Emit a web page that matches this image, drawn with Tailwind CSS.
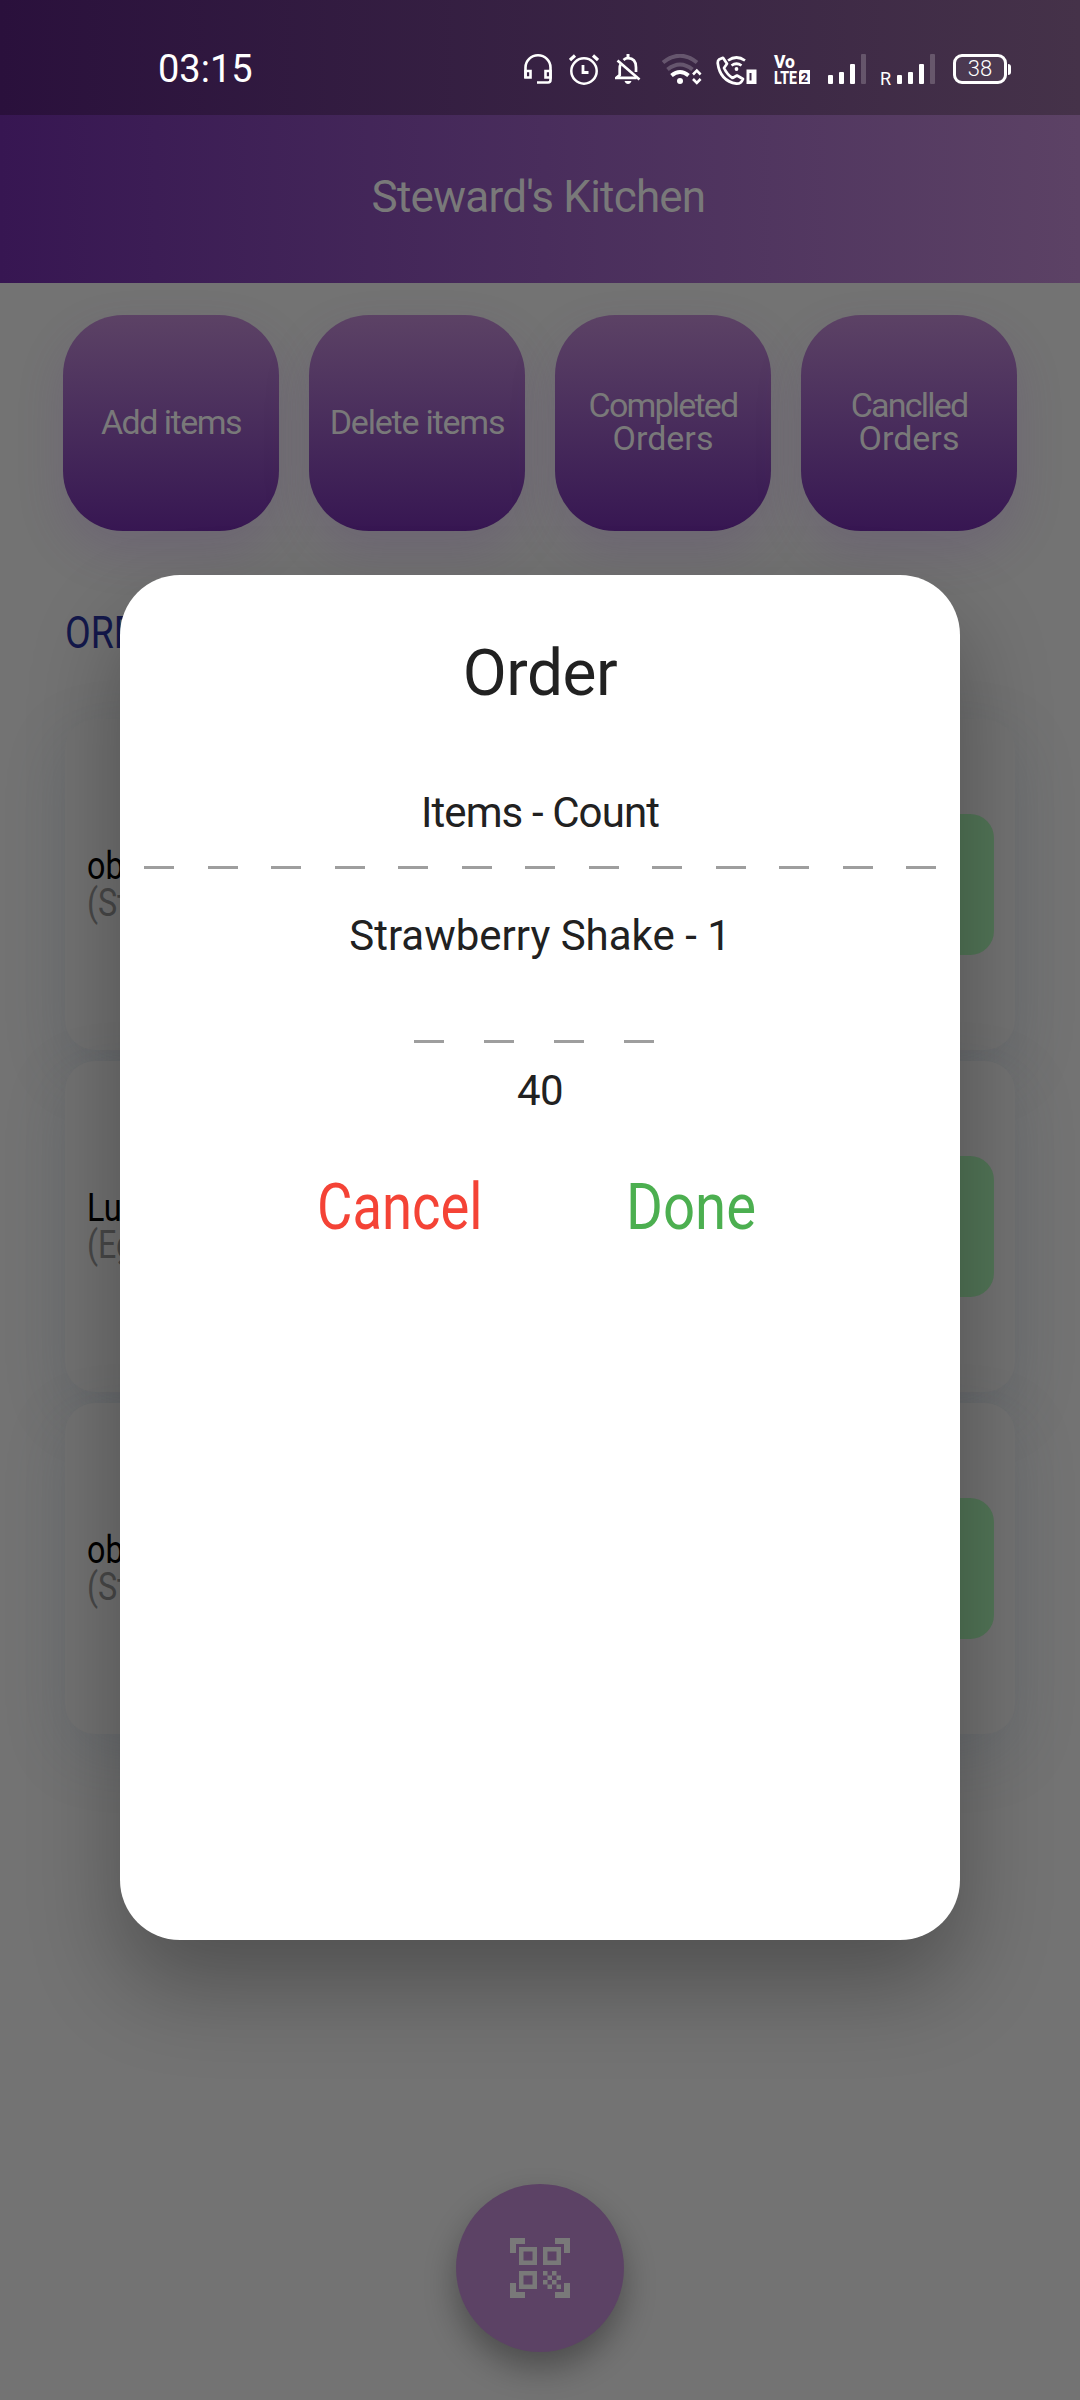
<!DOCTYPE html>
<html lang="en">
<head>
<meta charset="utf-8">
<title>Steward's Kitchen</title>
<script src="https://cdn.jsdelivr.net/npm/@tailwindcss/browser@4"></script>
</head>
<body class="w-[1080px] h-[2400px] overflow-hidden bg-[#737373] font-['Roboto',sans-serif]">
<div class="relative flex h-[2400px] w-[1080px] flex-col overflow-hidden">

  <!-- Status bar -->
  <header class="flex h-[115px] shrink-0 items-start bg-linear-to-r from-[#2a103c] to-[#453249] pt-[54px] text-white">
    <div class="ml-[158px] h-8 w-[366px] pt-px text-[38px] leading-[29px]">03:15</div>
    <!-- headset -->
    <svg class="h-8 w-7" viewBox="0 0 28 32" fill="none" stroke="white" stroke-width="2.6"><path d="M1.5 24V13.5a12.5 12.2 0 0 1 25 0V26q0 2.5-2.5 2.5H13"/><path d="M1.5 17h5v6.5h-5zM21.500 17h5v6.500h-5z"/></svg>
    <!-- alarm -->
    <svg class="ml-[17px] h-8 w-[30px]" viewBox="0 0 30 32" fill="none" stroke="white" stroke-width="2.5"><circle cx="15" cy="17" r="12.700"/><path d="M14 11v7.500h5.500" stroke-width="2.800"/><path d="M1 6l5-4.500M29 6l-5-4.500" stroke-width="3.200"/></svg>
    <!-- bell off -->
    <svg class="ml-[16px] h-8 w-[26px]" viewBox="0 0 26 32" fill="none" stroke="white" stroke-width="2.700"><path d="M5.500 10.500q-.8 1.500-.8 4V21l-3.300 2.800h20.200M8.500 6q2-1.800 4.500-1.800 8 0 8 9.300v4.500"/><path d="M2.500 6.500L24.500 25.500"/><path d="M13 0v4" stroke-width="3"/><path d="M9.500 27h7q-1 3-3.500 3t-3.500-3z" fill="white" stroke="none"/></svg>
    <!-- wifi -->
    <svg class="ml-[20px] h-8 w-[41px]" viewBox="0 0 41 32" fill="none" stroke="white" stroke-width="4"><g opacity=".22"><path d="M2 8.500Q19 -5 36 8.500"/><path d="M6.500 15.500Q19 5.500 31.500 15.500"/></g><path d="M10.500 21.500Q19 14.500 27.500 21.500"/><circle cx="19" cy="27" r="3" fill="white" stroke="none"/><path d="M32 20.500l3.800-3.800 3.800 3.800M32 25l3.800 3.800L39.600 25" stroke-width="2.600"/></svg>
    <!-- wifi calling -->
    <svg class="ml-[14px] h-8 w-[42px]" viewBox="0 0 42 32" fill="none" stroke="white" stroke-width="2.700"><path d="M3 5.500l4-1.700 4 6-3 4.200q3 6.500 8.500 10l4.500-2.500 6 3.500q-2 5-6.500 4.700Q4 27 1.700 9q0-2.500 1.300-3.500z" stroke-linejoin="round"/><path d="M12 6.500q8.500-6 17 0M15.500 11.500q5-3.500 10 0"/><circle cx="20.500" cy="15" r="1.900" fill="white" stroke="none"/><path d="M30.500 15.500h10V30h-10z" fill="white" stroke="none"/><path d="M34.500 19v7.500" stroke="#3d2947" stroke-width="2"/></svg>
    <!-- VoLTE 2 -->
    <svg class="ml-[16px] h-8 w-[37px] overflow-visible" viewBox="0 0 37 32" fill="white" font-family="Roboto, sans-serif" font-weight="800"><text x="0" y="14" font-size="18.500" textLength="21" lengthAdjust="spacingAndGlyphs">Vo</text><text x="0" y="30" font-size="19" textLength="23" lengthAdjust="spacingAndGlyphs">LTE</text><path d="M26 16h10v14H25V18z"/><text x="27" y="28" font-size="13" textLength="7" lengthAdjust="spacingAndGlyphs" fill="#3d2947">2</text></svg>
    <!-- signal 1 -->
    <svg class="ml-[17px] h-8 w-[38px]" viewBox="0 0 38 32" fill="white"><rect y="21" width="5" height="9" rx="1"/><rect x="11" y="18" width="5" height="12" rx="1"/><rect x="22" y="10" width="5" height="20" rx="1"/><rect x="33" width="5" height="30" rx="1" opacity=".2"/></svg>
    <span class="ml-[14px] w-[17px] pt-[16px] text-[18px] leading-[18px]">R</span>
    <!-- signal 2 -->
    <svg class="h-8 w-[38px]" viewBox="0 0 38 32" fill="white"><rect y="21" width="5" height="9" rx="1"/><rect x="11" y="18" width="5" height="12" rx="1"/><rect x="22" y="10" width="5" height="20" rx="1"/><rect x="33" width="5" height="30" rx="1" opacity=".2"/></svg>
    <!-- battery -->
    <div class="ml-[18px] flex items-center">
      <div class="flex h-[30px] w-[54px] items-center justify-center rounded-[9px] border-[3px] border-white bg-white/5 text-[22px] font-light leading-none">38</div>
      <div class="ml-px h-[11px] w-[3px] rounded-r bg-white"></div>
    </div>
  </header>

  <!-- App bar -->
  <div class="flex h-[168px] shrink-0 items-center justify-center bg-linear-to-r from-[#371652] to-[#5c4265] text-[44px] leading-none tracking-[-0.8px] text-[#797979]"><h1 class="-mt-[5px] -ml-[3px]">Steward's Kitchen</h1></div>

  <!-- Actions -->
  <nav class="mt-8 grid grid-cols-4 gap-[30px] pr-[63px] pl-[63px] text-center text-[34px] leading-[33px] tracking-[-1.5px] text-[#797979]">
    <button class="flex h-[216px] items-center justify-center rounded-[60px] bg-linear-to-b from-[#5c4265] to-[#371652] pb-0.5 shadow-[0_20px_45px_rgba(90,60,120,0.22)]">Add items</button>
    <button class="flex h-[216px] items-center justify-center rounded-[60px] bg-linear-to-b from-[#5c4265] to-[#371652] pb-0.5 shadow-[0_20px_45px_rgba(90,60,120,0.22)]"><span class="tracking-[-1.2px]">Delete items</span></button>
    <button class="flex h-[216px] flex-col items-center justify-center rounded-[60px] bg-linear-to-b from-[#5c4265] to-[#371652] pb-0.5 shadow-[0_20px_45px_rgba(90,60,120,0.22)]"><span class="tracking-[-1.8px]">Completed</span><span class="tracking-normal">Orders</span></button>
    <button class="flex h-[216px] flex-col items-center justify-center rounded-[60px] bg-linear-to-b from-[#5c4265] to-[#371652] pb-0.5 shadow-[0_20px_45px_rgba(90,60,120,0.22)]"><span class="tracking-[-1.8px]">Canclled</span><span class="tracking-normal">Orders</span></button>
  </nav>

  <!-- Orders -->
  <h2 class="mt-[80px] ml-[65px] h-[44px] w-[120px] origin-left scale-x-85 text-[44px] leading-[44px] text-[#13184b]">ORD</h2>
  <main class="mt-[64px] flex flex-col gap-[11px] pr-[65px] pl-[65px]">
    <section class="flex h-[331px] items-center justify-between rounded-[30px] bg-[#727272] pr-[21px] pl-[22px] shadow-[0_20px_60px_rgba(75,88,98,0.22)]">
      <div class="origin-left scale-x-85 pt-px text-[38px] leading-[37px]"><p class="text-black">ob</p><p class="text-[#484848]">(Str</p></div>
      <div class="h-[141px] w-[160px] rounded-[24px] bg-[#527557]"></div>
    </section>
    <section class="flex h-[331px] items-center justify-between rounded-[30px] bg-[#727272] pr-[21px] pl-[22px] shadow-[0_20px_60px_rgba(75,88,98,0.22)]">
      <div class="origin-left scale-x-85 pt-px text-[38px] leading-[37px]"><p class="text-black">Lu</p><p class="text-[#484848]">(Eg</p></div>
      <div class="h-[141px] w-[160px] rounded-[24px] bg-[#527557]"></div>
    </section>
    <section class="flex h-[331px] items-center justify-between rounded-[30px] bg-[#727272] pr-[21px] pl-[22px] shadow-[0_20px_60px_rgba(75,88,98,0.22)]">
      <div class="origin-left scale-x-85 pt-px text-[38px] leading-[37px]"><p class="text-black">ob</p><p class="text-[#484848]">(Str</p></div>
      <div class="h-[141px] w-[160px] rounded-[24px] bg-[#527557]"></div>
    </section>
  </main>

  <!-- Scan button -->
  <button class="mx-auto mt-auto mb-12 flex size-[168px] items-center justify-center rounded-full bg-[#5c4265] shadow-[0_16px_32px_rgba(0,0,0,0.33)]">
    <svg class="size-[60px]" viewBox="0 0 60 60" fill="#797979"><path d="M0 0h15v6H6v9H0zM45 0h15v15h-6V6h-9zM0 45h6v9h9v6H0zM54 45h6v15H45v-6h9z"/><path fill-rule="evenodd" d="M9 9h18v18H9zM13.500 13.500v9h9v-9zM33 9h18v18H33zM37.500 13.500v9h9v-9zM9 33h18v18H9zM13.500 37.500v9h9v-9z"/><path d="M33 33h4.500v4.500H33zM42 33h4.500v4.500H42zM37.500 37.500H42V42h-4.500zM46.500 37.500H51V42h-4.500zM33 42h4.500v4.500H33zM42 42h4.500v4.500H42zM37.500 46.500H42V51h-4.500zM46.500 46.500H51V51h-4.500z"/></svg>
  </button>

  <!-- Order dialog -->
  <div role="dialog" class="absolute top-[575px] left-[120px] flex h-[1365px] w-[840px] flex-col items-center rounded-[60px] bg-white px-6 text-[42px] leading-[42px] text-[#212121] shadow-[0_45px_90px_rgba(0,0,0,0.3)]">
    <h2 class="mt-[67px] h-16 text-[64px] leading-16 tracking-[-0.5px]">Order</h2>
    <p class="mt-[86px] tracking-[-0.9px]">Items - Count</p>
    <div class="mt-[32px] flex w-full justify-between">
      <i class="h-[3px] w-[30px] bg-[#9e9e9e]"></i><i class="h-[3px] w-[30px] bg-[#9e9e9e]"></i><i class="h-[3px] w-[30px] bg-[#9e9e9e]"></i><i class="h-[3px] w-[30px] bg-[#9e9e9e]"></i><i class="h-[3px] w-[30px] bg-[#9e9e9e]"></i><i class="h-[3px] w-[30px] bg-[#9e9e9e]"></i><i class="h-[3px] w-[30px] bg-[#9e9e9e]"></i><i class="h-[3px] w-[30px] bg-[#9e9e9e]"></i><i class="h-[3px] w-[30px] bg-[#9e9e9e]"></i><i class="h-[3px] w-[30px] bg-[#9e9e9e]"></i><i class="h-[3px] w-[30px] bg-[#9e9e9e]"></i><i class="h-[3px] w-[30px] bg-[#9e9e9e]"></i><i class="h-[3px] w-[30px] bg-[#9e9e9e]"></i>
    </div>
    <p class="mt-[46px]">Strawberry Shake - 1</p>
    <div class="mt-[83px] mr-[12px] flex gap-10">
      <i class="h-[3px] w-[30px] bg-[#9e9e9e]"></i><i class="h-[3px] w-[30px] bg-[#9e9e9e]"></i><i class="h-[3px] w-[30px] bg-[#9e9e9e]"></i><i class="h-[3px] w-[30px] bg-[#9e9e9e]"></i>
    </div>
    <p class="mt-[27px] tracking-[-0.6px]">40</p>
    <div class="mt-[64px] flex w-full pl-[173px] text-[64px] leading-16">
      <button class="w-[309px] origin-left scale-x-85 text-left text-[#f44336]">Cancel</button>
      <button class="origin-left scale-x-88 text-left text-[#4caf50]">Done</button>
    </div>
  </div>
</div>
</body>
</html>
